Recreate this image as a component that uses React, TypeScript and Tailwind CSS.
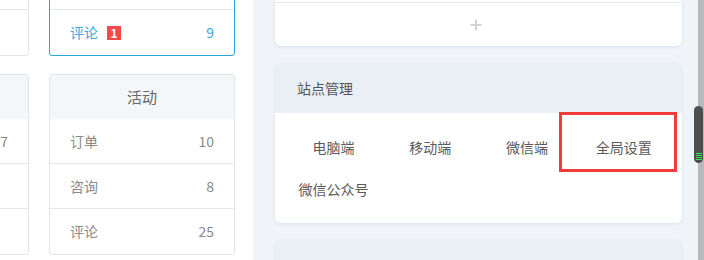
import React from "react";

const font = { fontFamily: '"Noto Sans CJK SC", "Noto Sans", sans-serif' };

function Row({ label, value, active, badge, last }: { label: string; value: string; active?: boolean; badge?: string; last?: boolean }) {
  return (
    <div className={`h-[45px] flex items-center justify-between pl-[20px] pr-[20px] text-[14px] ${last ? "" : "border-b border-[#e3e8e6]"} ${active ? "text-[#3aa7df]" : "text-[#8a8a8a]"}`}>
      <div className="flex items-center gap-[9px]">
        <span>{label}</span>
        {badge && (
          <span className="w-[14px] h-[14px] bg-[#f24a4a] text-white text-[12px] font-bold leading-[14px] flex items-center justify-center">{badge}</span>
        )}
      </div>
      <span>{value}</span>
    </div>
  );
}

function StatCard({ title, rows, active }: { title: string; rows: { label: string; value: string; badge?: string }[]; active?: boolean }) {
  return (
    <div className={`w-[186px] shrink-0 rounded-[3px] overflow-hidden bg-white border ${active ? "border-[#2aa8e0]" : "border-[#dfe6e3]"}`}>
      <div className="h-[44px] bg-[#f5f6fa] flex items-center justify-center text-[15px] text-[#666]">{title}</div>
      {rows.map((r, i) => (
        <Row key={i} label={r.label} value={r.value} badge={r.badge} active={active && i === rows.length - 1} last={i === rows.length - 1} />
      ))}
    </div>
  );
}

export default function App() {
  const items = ["电脑端", "移动端", "微信端", "全局设置", "微信公众号"];
  return (
    <div className="w-[704px] h-[260px] overflow-hidden flex relative bg-white" style={font}>
      {/* left white area */}
      <div className="w-[253px] shrink-0 overflow-hidden">
        <div className="ml-[-157px] flex gap-[20px]">
          <div className="flex flex-col gap-[18px] mt-[-125px]">
            <StatCard title="" rows={[{ label: "", value: "" }, { label: "", value: "" }, { label: "", value: "" }]} />
            <StatCard title="" rows={[{ label: "", value: "7" }, { label: "", value: "" }, { label: "", value: "" }]} />
          </div>
          <div className="flex flex-col gap-[18px] mt-[-125px]">
            <StatCard active title="" rows={[{ label: "", value: "" }, { label: "", value: "" }, { label: "评论", value: "9", badge: "1" }]} />
            <StatCard title="活动" rows={[{ label: "订单", value: "10" }, { label: "咨询", value: "8" }, { label: "评论", value: "25" }]} />
          </div>
        </div>
      </div>

      {/* right gray area */}
      <div className="w-[445px] shrink-0 bg-[#f0f4f8] pl-[22px] pr-[16px] flex flex-col gap-[17px]">
        <div className="shrink-0 mt-[-40px] bg-white rounded-[6px] shadow-[0_1px_3px_rgba(120,140,170,0.18)] overflow-hidden">
          <div className="h-[43px] border-b border-[#e4e9ee]" />
          <div className="h-[43px] flex items-center justify-center pr-[6px]">
            <svg width="12" height="12" viewBox="0 0 12 12">
              <path d="M6 0.5V11.5M0.5 6H11.5" stroke="#d4d4d4" strokeWidth="2" />
            </svg>
          </div>
        </div>
        <div className="shrink-0 bg-white rounded-[6px] shadow-[0_1px_3px_rgba(120,140,170,0.18)] overflow-hidden">
          <div className="h-[50px] bg-[#e9eff4] flex items-center pl-[22px] text-[14px] text-[#555]">站点管理</div>
          <div className="pt-[13px] pb-[13px] pl-[10px] pr-[10px] grid grid-cols-4 w-[407px]">
            {items.map((t) => (
              <div key={t} className="h-[42px] w-[97px] flex items-center justify-center text-[14px] text-[#5a5a5a]">{t}</div>
            ))}
          </div>
        </div>
        <div className="shrink-0 h-[40px] bg-[#e9eff4] rounded-[6px] shadow-[0_1px_3px_rgba(120,140,170,0.18)]" />
      </div>

      {/* scrollbar track */}
      <div className="w-[6px] shrink-0 bg-[#b9b9bb]" />

      {/* scrollbar thumb */}
      <div className="absolute left-[694px] top-[106px] w-[9px] h-[57px] rounded-[5px] bg-[#4e4e50] flex flex-col items-center justify-end pb-[3px] gap-[1px]">
        <div className="w-[6px] h-[1px] bg-[#3ddc5a]" />
        <div className="w-[6px] h-[1px] bg-[#3ddc5a]" />
        <div className="w-[6px] h-[1px] bg-[#3ddc5a]" />
        <div className="w-[6px] h-[1px] bg-[#3ddc5a]" />
      </div>

      {/* red annotation box */}
      <div className="absolute left-[559px] top-[112px] w-[118px] h-[60px] border-[3px] border-[#f23b3b]" />
    </div>
  );
}
